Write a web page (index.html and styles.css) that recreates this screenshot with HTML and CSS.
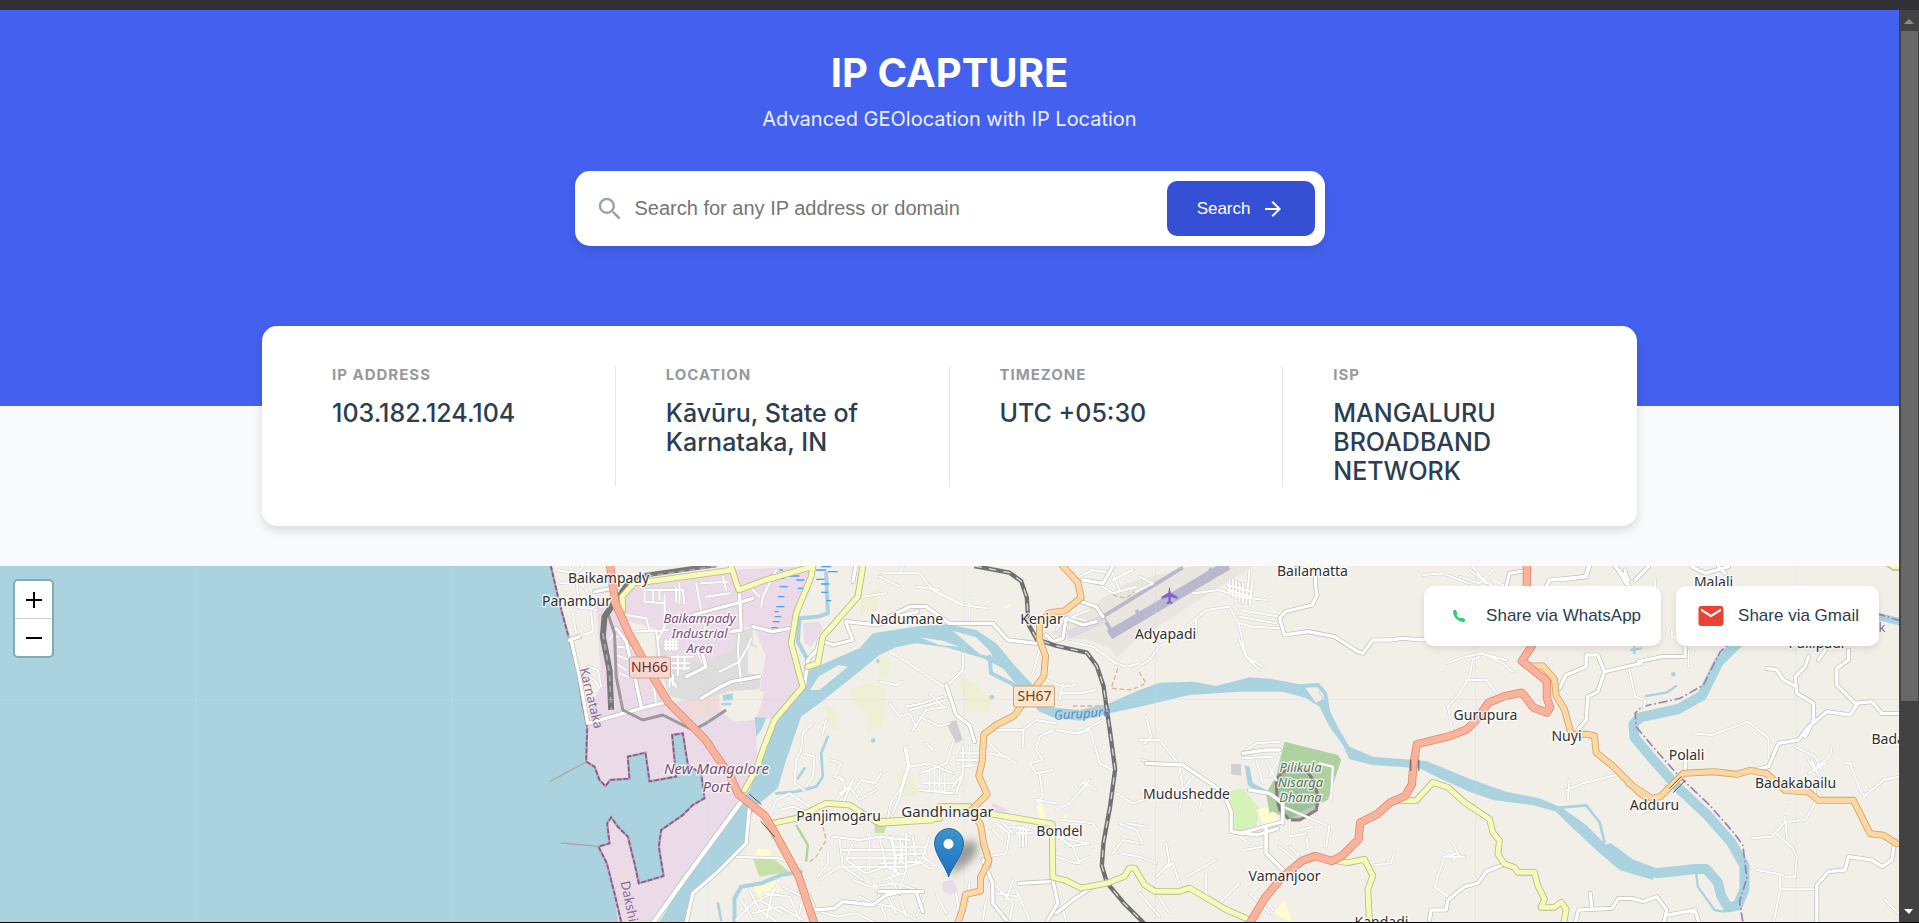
FILE: index.html
```html
<!DOCTYPE html>
<html lang="en">
<head>
<meta charset="utf-8">
<meta name="viewport" content="width=device-width, initial-scale=1">
<title>IP Capture</title>
<link rel="stylesheet" href="styles.css">
</head>
<body>
<div class="topbar"></div>
<div class="frame">
<main class="page">
  <header class="hero">
    <h1 class="hero-title">IP CAPTURE</h1>
    <p class="hero-sub">Advanced GEOlocation with IP Location</p>
    <form class="search">
      <svg class="icon" viewBox="0 0 24 24" fill="#9ca3af" aria-hidden="true"><path d="M15.5 14h-.79l-.28-.27A6.471 6.471 0 0 0 16 9.5 6.5 6.5 0 1 0 9.5 16c1.61 0 3.09-.59 4.23-1.57l.27.28v.79l5 4.99L20.49 19l-4.99-5zm-6 0C7.01 14 5 11.99 5 9.5S7.01 5 9.5 5 14 7.01 14 9.5 11.99 14 9.5 14z"/></svg>
      <input class="search-input" type="text" aria-label="IP address or domain" placeholder="Search for any IP address or domain">
      <button class="search-btn" type="button">Search
        <svg class="arrow" viewBox="0 0 24 24" fill="#fff" aria-hidden="true"><path d="m12 4-1.41 1.41L16.17 11H4v2h12.17l-5.58 5.59L12 20l8-8z"/></svg>
      </button>
    </form>
  </header>

  <section class="info">
    <div class="cell"><h2 class="label">IP ADDRESS</h2><p class="value">103.182.124.104</p></div>
    <div class="cell"><h2 class="label">LOCATION</h2><p class="value">Kāvūru, State of Karnataka, IN</p></div>
    <div class="cell"><h2 class="label">TIMEZONE</h2><p class="value">UTC +05:30</p></div>
    <div class="cell"><h2 class="label">ISP</h2><p class="value">MANGALURU BROADBAND NETWORK</p></div>
  </section>

  <section class="map">
    <svg class="map-art" viewBox="0 566 1900 356" preserveAspectRatio="xMidYMin slice" role="img" aria-label="Map around Gandhinagar">
      <defs>
        <linearGradient id="pin" x1="0" y1="0" x2="0" y2="1"><stop offset="0" stop-color="#3f93ce"/><stop offset="1" stop-color="#1b6fc0"/></linearGradient>
        <filter id="soft" x="-40%" y="-40%" width="180%" height="180%"><feGaussianBlur stdDeviation="4"/></filter>
        <g id="lanes">
          <path d="M150 20l20 40 10 80 50 10M110 30l60 10 20-20M120 70l60-5 30 40M150 235l70-20-5-60M160 160l10 60M205 320l30 10 10 50M190 340l35 20 15 25M130 130l60 15"/>
          <path d="M375 90v35l60 5 5 60M380 90h110l5 40M400 90v30M420 90v30M470 85v40M480 70v60M435 105v95l-20 40M530 70l15 80M545 70l80 -5M560 110l70-10M610 50l10 40M660 95l5 30M690 80l30 30M770 30l-40 80-5 30M320 165l60 10 10 35M335 215l110-5M410 210l10 80"/>
          <path d="M440 240v30M450 240v30M460 240v30M470 240v30M435 245h40M435 255h40M435 265h40M440 290h80M450 310h60M450 325h60M455 290v50M475 285v60M495 290v40M520 250l20 40 15 30M550 230l10-40M440 340l30 40M450 350v30M460 345v30"/>
          <path d="M290 210l-20 30M290 230l60-5M295 260l40 5M290 285l40 15M290 310l30 20M300 340l50 20M400 360l10 70M660 210l-5 60 10 100M600 335l60-30 25-45 10-25"/>
          <path d="M880 490l-30 30-5 50-15 30-5 70 30 20M850 580l35 10-5 60-20 30M920 480l-10 40M935 600l30 10-20 40 30 10M1085 640l-20 30-40-10-20 30M960 650l20 40-30 30M870 740l-60-40-40 20-20 50M780 750l40-10 50 20M960 700l30-20 30 40 50-30M1155 565l10 50-20 70-30 40-10 50M1000 660l-30 70M1110 430l30 40 30-10 20 40M1080 50l60 30M1100 100l-70 10"/>
          <path d="M940 830l80 10 60-10 90 10M960 840l10 80 60 40M1000 850l-20 50 60 40 60-20M1050 820v110M1080 830l20 90 40 20M1120 830l10 110M1150 850l-10 60M970 870h190M980 895h180M960 920h200l40-10M960 920l-60 40M1000 960l50 20 80-10 60 20M925 880v30l-30 40M1060 960l20 50M1110 950l30 50"/>
          <path d="M650 890l130 5 60 25M780 960l-20 40-60 30-50 50M690 990l30 60 50 35M730 1000l80 10 30 70M760 990l-20 90M790 980l60 30-10 50M700 1060l80-20 70 40M660 1010l40 70M720 1020l70 40M890 1050l60 20 60-10 60 30M1020 1010l40 20 60 10 70 40M1080 1020l20 60"/>
        </g>
        <g id="lanes2">
          <path d="M10 40h110l40 50 90 45 70 10M270 110v70M60 40l10-20M180 90l-70-10M250 280v50l-50 50M30 275l50 30 60 40 60 40M0 365l50 10 20-10M80 440l50-10 60-20M100 510l40-60 60-10M120 470l60 30 30-10M150 400l40 40M90 450l110-30"/>
          <path d="M140 550l20 20M80 560l10 60-30 90-20 50M90 620l60-10 70 30M120 640l80-30 20-60M150 630v60M165 625v70M180 630v60M195 640v60M130 670h100M120 690l100 10M250 560v80l-30 40M270 560v60M230 600h70M235 620l60-5M240 580h60M250 640l-20 60M330 580l50 10 30 20M320 540l50 50"/>
          <path d="M430 510v50M480 530l40-20M480 530l-10 40 20 30-40 10 20 30 50-10M350 510h80l40-30 60 10M530 510l60 10 40-10 20 60 10 40 40 20M500 360l50 20 40-5M550 370l-10 50M540 400h60l50-10M460 340l20-70M600 520l70-40"/>
          <path d="M350 790l40 30-10 60-60 10M370 790l30 30M390 800l60 10M340 810l30 30M420 800v60M430 800v60M410 820h50M440 810v50M530 750l40-20 60-70M480 640l10 70-20 20M550 780l90 10 20 30M520 820l60 40 20 50M540 830l80 20M560 860l70 -10M530 890l60 20 40-20M470 720l60 10M600 680l10-15 40 25M710 700l50 30 60-20"/>
          <path d="M780 540h60l40 50 20 25M790 600l30 10M800 470l15 60-20 20M900 620l10 70M950 640l-40 50-10 60M980 660l-20 90M720 790l50 20 20 40M740 790l60 10M720 880l60 10 50 20M700 880l30-40 50 10M860 850l10 60-40 40M850 930l30-20 20 60M920 950l90-50M980 940v60l40 40M1080 970l-60 60"/>
          <path d="M940 100l80-10 60 20 80 10M920 200l60-50 70-10 30 60 20 90 40 40M1080 170l110 20M950 180v40l-70 20-40 20-30 40-50 30M570 245l70 15 70 50 30 10 40-10M1050 60v40M1060 60v50M1070 65v50M1080 70v55M1090 70v60M1045 90l70 20M1045 75l70 20M1120 60l-10 80"/>
          <path d="M0 910l120-5 30 20M30 830l20 60-10 60M60 830l10 80M80 820v110M100 830l10 80M40 860h100M50 885l90-5M80 930l-20 60M150 830l-20 60 40 30M10 960l60-20M230 1000l10 70M20 1000l30 60M60 1010l20 60M140 1000l-30 70M310 940l30 30 60 60-10 50M400 960l-20 60M350 1000l70 10M310 1080l10-60M410 990l40 90M170 1000l30 60M270 970l-10 70"/>
          <path d="M600 50l40-20 60 10 20 50M640 60l60 40 70-20M700 60l60-30M760 100l60-30M620 180l-60-10-30 40M580 170l50-20M780 50l40 20M560 1085l-10-40 60-50M780 1000l60 70M820 980l50 80"/>
        </g>
        <g id="lanes3">
          <path d="M0 150l120 20M0 190l40 10 80 5M0 240l20 50 50 30M30 30l-10 100M550 45l60-5 80 30M690 30l70 50M700 20l40 50M660 50l60 20 40-40M760 60l40 20M620 310l60-20 50-10 60 30 30 25M720 280l80 20M690 350l-30 50-35 40 15 80M680 360l60 0 40 50M690 350l10-50 20-10M980 690l50-20 100-25M990 660l-5 60"/>
          <path d="M20 570l30-20 70-5M10 595l90-5M50 600l20 70M80 600l30 60M120 590l-30 60M240 610l40 10-5 100M130 740l140 60-10 60M150 780v50l50-10M180 810l40-10M200 830l10 50M120 860l60 50M150 860l40 40M10 870l60-10M30 1000l60 60M60 990l40 60M50 920l70 60M0 830l30 20M405 915l50-5 10-35M640 850l15 30-40 10-30 90 40 30M620 890h55M640 900l20-15"/>
        </g>
        <g id="lanes4">
          <path d="M330 320l20 90 30 10-5 30M520 520l60 5 110-40 60 50v60M700 835l60-5 40-45 60-5 30-50v-50M770 820l50 40 15 30-5 60-30 0M715 930l80 15M785 950v40l-20 100M785 988h110M830 560l60 30 20 40M880 600l20 50M870 640l50 -30M890 630l-20 -30M940 560l-5 30-40 30M980 610l15 0 30 80 15 20M1035 710l60-50 45-10M1100 1020l40 40M460 210v20l40 10M410 60v40M800 770l5 60M510 270v50M810 700v30"/>
        </g>
        <g id="minor">
          <path d="M150 240l30-10M155 240l25 110 25 140 160-45 80-20M225 95l80-15M290 205l30 40 25 100 20 95M700 200l60 15 50-10M520 165l150-40 30-10M660 95l5 115-30 5M500 350l60-30-15-50M545 415l50-30 40-20 85-15M855 380l10-80 30-35M1195 155l-60 15-60 25 -95-10M980 190l20 50-60 15-40-15-10 40M1000 65l10-50M690 740l-10 110-90 90-70 60-20 90"/>
          <path d="M870 1010l15 40 60-5 25-20 90 10 40-30 50-10 60 0"/>
        </g>
        <g id="minor2">
          <path d="M0 185l90-45h50l70 50h130l45 50 85 10M500 225l20 20 30-10 10-60 50 20 40-10M590 120l60 20 20 30M610 60l60 10 30-50M200 375l30 90 40 30 15 50M310 900l30 70v60l40 50M420 970l90-5M520 960l15 70-30 50M530 1060l50-40 60-40 45-10M800 610l110 5 60 40 60 40 25 60v60l80 10 60-20M1090 580l70-10 40 0M1160 800v80l60 60M0 995h110l20 60"/>
        </g>
        <g id="minor3">
          <path d="M228 20v60l5 25-15 30-80 20-18 20 15 50 70-10 80 15 70 45 15 5 30-40h50l40-5 60 5 30-20M0 820l130-35M30 690l60 10 40 30v60M80 800v80l50 50M790 915l-50 20-25 35-40 10-50 40-5 30h-45l-5 30M960 385l20-40 60-25v-35h35l20 50 110-25M1095 335l-20 60-30 15-5 70-30 35M800 80l10-40 60-10M920 80l10-20 110-10 10-30M1160 70l-30-50"/>
        </g>
        <g id="minor4">
          <path d="M210 20l-10 30-70 10M330 80l-10-50M290 20l40 40M350 60l40-40M520 20l40 20 70-20M600 20l20 20M500 290l-70 0-70 15M500 250v40M990 270v30l-35 25v50l60 60-20 30-70-10-55 45-30 40-60 10-30 70-45 10M1010 430l50-5 30 35h50M870 290l-10 30-30 30 5 50 50 30v50l-25 50M745 325l30 5 20 30 40 20M1130 840l-10 60-30 20-30-20-70-10-10 40-50 5-35 40v120M500 600v35M170 1090l10-40 100-5 20-30h40l35 10 40-15 30 40-10 40M215 1000l5 40M450 1065l80-15 10 35M900 300l20-30"/>
        </g>
        <g id="yellow"><path d="M310 150l-2-40 35-40 80-10 215-30 20 60 80-30 140-40M635 20l10 30M880 20l-5 30-45 110-15 90 35 130-85 100-35 90-20 60-35 60M1030 20l-15 90-70 80-35 40-15 80-30 10M760 790l70-15 90-45 70 5 80 50 190-10"/></g>
        <g id="yellow2"><path d="M0 790l160-10 20-40h90M335 762l183 30 2 160 40 10 45 22 80-15 50-20 15-25h15l30 50 30 20h75l30-10 110 65 80 35"/></g>
        <g id="yellow3"><path d="M480 722l50 0 50-55 45 15 50 45 75 50 10 40 20 25-5 40 20 30 30 10 10 15h50l10 40 20 40-10 25h40l20-15 15 20-10 60M280 900l45 8 50-10 25 50-15 40 5 100"/></g>
        <g id="orange2"><path d="M550 18l45 50 10 45-50 40-45 5-30 30 0 50 18 50-5 60-60 80-30 40-50 25-40 30-5 80-10 45 25 55-50 50 30 40 10 60 15 50-25 50v40l-45 10-10 50-30 80-30 10"/></g>
        <g id="orange3"><path d="M870 318l40 0 35 40 5 50 25 40 20 75 50 0 20 5 5 50 50 40 80 80 20 15"/></g>
        <g id="orange4"><path d="M330 670l70 45 25 -5 70-70 90-5 70 8 40-12 50 10 55 50 70 5 30 25h105l30 60 20 40 40 5 40 25"/></g>
        <g id="trunk"><path d="M272 18l15 110 40 90 60 110 60 100 110 110 75 110 25 55 80 65 40 70 60 110 30 90 20 60"/></g>
        <g id="trunk3"><path d="M862 18v70l15 170-30 45 75 60v50l10 30-10 15-40-15-35-45-50 10-50 20-35 50-30 30-50 20-100 25-10 60-5 60-20 35-45 20-40 35-50 25-5 50-50 50-30 15-50-15-40 15-60 50-50 60-60 100"/></g>
      </defs>

      <g transform="translate(520 560) scale(.33333)">
        <rect x="-1800" y="0" width="6200" height="1300" fill="#f2efe9"/>
        <g fill="#ebdbe8">
          <path d="M300 95l100-25 240-40 240-12-50 160-5 110 23 100-70 85-70 5 30-190-35-90-60 10 5 65-100 30-135 20-10-120-80-20zM230 110l60 0 90 220 60 100 60-10 100-15v35l40 45 65-5 7 80 3 60-55 100-60 90-100 140-100 160H300L150 600l50-105 30-90 15-30zM850 190l50-5 10 25-35 50-20-10zM685 245l25 10 10 25-20 10z"/>
          <path d="M1420 730l50 20-20 15-40-5zM1270 965l30-5 15 30-20 15-25-10z"/>
        </g>
        <path fill="#ddd" d="M410 240l50 60 90 5 95-35 0-60 55-5v60l-15 60 40 20-5 43-90 5-100 35-80-20-20-60z"/>
        <path fill="#f2efe9" d="M685 250l55 35-15 60-40-5zM605 405l100-15 30 5-25 85-60 0-45-30z"/>
        <path fill="#f2dad9" d="M495 430l100-25 5 35-80 45zM300 915l25 0 0 40-20 5zM365 365l10 10 0 30-15 0z"/>
        <g fill="#eef0d5"><path d="M990 390l50-20 60 15-10 120-50 10-5-60-35-30zM915 435l30 10 20 70-35-5zM1025 110l60-30-15 70-50 20zM1130 640l50 20v50l-40-5zM1080 280l35 20-10 60-30-10zM1310 340l60 30 45 50-10 40-60-10zM1130 640l50 10 20 60-60-10z"/></g>
        <path fill="#c8dfa9" d="M700 895l60 0 50 40-90 15zM1065 790l35 5-5 25h-30z"/>
        <path fill="#d5f3b8" d="M2125 695l45-10 50 60-10 55-70 20-15-60z"/>
        <path fill="#fffdd0" d="M715 865l40 5-5 20-40-5zM700 975l80-15 0 30-60 25zM2210 750l50-10 15 40-40 15zM1550 720l15 0 15 60-20 0zM2265 1060l30-40 25 70zM1620 780l25-20-10 30zM1450 140l30-10-15 15z"/>
        <path fill="#aed1a0" d="M2295 545l160 40 10 15-40 120-70 30-45 30-60-30-5-60 25-40zM2240 700l30-20 10 60-30 20z"/>
        <path fill="#8fb894" d="M2270 655l35-20h60l20 50 15 50-40 40-35 8-35-25z" opacity=".6"/>
        <path fill="none" stroke="#7d5670" stroke-width="9" opacity=".75" d="M2285 640l-15 20 3 60 8 30 30 30 30 0 50-30 5-40-15-50-20-30-60 0z"/>
        <path fill="#d0cfcf" d="M1280 490l30-10 20 60-20 10zM2135 612l30 0v35l-30-5z"/>

        <!-- airport -->
        <path fill="#e8e6df" d="M1590 220l230-150 200-52h180l-190 120-170 110-50 45-20-30-70-25-60 0z"/>
        <path fill="none" stroke="#bab8cf" stroke-width="30" d="M1770 225L2125 15"/>
        <path fill="none" stroke="#bab8cf" stroke-width="11" d="M1750 170L1990 22M1750 170l30 50M1850 150l15 25M2070 25l15 20"/>
        <path fill="none" stroke="#dcdae2" stroke-width="26" d="M1645 225l110-50"/>
        <path fill="#8461c4" d="M1950 80l4 18 20 12v7l-20-6-1 12 6 6v4l-9-3-9 3v-4l6-6-1-12-20 6v-7l20-12z"/>

        <!-- sea and harbour -->
        <path fill="#aad3df" d="M-1800 0L92 0 120 130 150 240 175 340 190 440 203 500 200 605 225 620 240 660 258 678 272 660 330 656 325 590 378 578 390 664 470 650 458 525 490 520 505 615 545 640 555 715 520 735 490 765 425 810 418 860 432 948 358 970 345 910 325 830 295 800 275 772 263 790 270 850 237 860 262 910 285 1000 320 1300-1800 1300z"/>
        <path fill="none" stroke="#b79ab8" stroke-width="7" d="M94 18L120 130 150 240 175 340 190 440 203 500 200 605 225 620 240 660 258 678 272 660 330 656 325 590 378 578 390 664 470 650 458 525 490 520 505 615 545 640 555 715 520 735 490 765 425 810 418 860 432 948 358 970 345 910 325 830 295 800 275 772 263 790 270 850 237 860 262 910 285 1000 306 1090"/>
        <path fill="none" stroke="#845f83" stroke-width="5" stroke-dasharray="14 6" d="M94 18L120 130 150 240 175 340 190 440 203 500 200 605 225 620 240 660 258 678 272 660 330 656 325 590 378 578 390 664 470 650 458 525 490 520 505 615 545 640 555 715 520 735 490 765 425 810 418 860 432 948 358 970 345 910 325 830 295 800 275 772 263 790 270 850 237 860 262 910 285 1000 306 1090"/>
        <path fill="none" stroke="#aaa" stroke-width="4" d="M92 664l108-58M124 849l112 10"/>

        <!-- rivers -->
        <g fill="#aad3df">
          <path d="M400 1120L500 950 600 810 660 730 690 690 740 570 770 490 845 400 870 330 960 290 1020 265 1060 220 1200 198 1280 193 1370 210 1430 250 1480 310 1540 375 1575 440 1680 450 1770 430 1860 390 1920 368 2020 365 2090 378 2190 352 2250 356 2350 374 2400 395 2425 440 2460 510 2490 560 2560 590 2720 603 2860 660 2960 695 3060 715 3130 745 3200 795 3290 885 3400 930 3400 960 3300 930 3230 870 3150 795 3110 755 3040 735 2920 720 2850 695 2760 655 2700 625 2560 615 2490 598 2470 555 2430 500 2400 440 2360 415 2290 395 2160 395 2010 405 1860 440 1770 460 1680 482 1600 472 1560 455 1500 385 1450 325 1390 295 1280 262 1190 250 1130 262 1080 285 1000 350 900 430 845 470 800 600 775 685 720 730 690 770 680 840 650 890 580 940 530 990 500 1050 495 1120z"/>
          <path d="M705 470l35 5-15 35-15 20zM610 405l30-5 0 20-30 3zM605 428l30 0v8h-30zM1400 890l20-5-5 40-15-5zM2175 615l15 5 10 50 40 20-20 10-35-25z"/>
          <circle cx="1061" cy="541" r="7"/><circle cx="1075" cy="303" r="6"/><circle cx="1417" cy="411" r="7"/><circle cx="3462" cy="343" r="7"/>
        </g>
        <path fill="#f2efe9" d="M872 390l25-40 60-35 28 5-30 25-55 45zM1200 232l70 10 50 18-60-5zM1300 212l70 20 40 40 10 20-40-10zM2355 380l35 3 20 35-20 10z"/>
        <g fill="none" stroke="#aad3df" stroke-linejoin="round" stroke-linecap="round">
          <path stroke-width="12" d="M1410 290l5 50 60 30 50 30M920 40l5 120-30 10-55 5-5 70 30 55M2345 378l50-3 22 25 8 50M645 1085l0-70 20-35 60-10 60-25 60-10"/>
          <path stroke-width="8" d="M3120 743l80-7 40 50 15 60M3150 785l40 40 50 30M595 1030l10 50M925 530l-20 50 5 70-20 30-60 15-60 5M855 625l-20 30"/>
          <path stroke-width="30" d="M3270 865l60 45 80 30 120-13 30 0 35 40 10 40 20 35 30-5 20-50 0-70-40-70-70-80-90-85-80-90-50-60-3-40 20-20 115-25 70-40 50-100 60-60 60-20"/>
          <path stroke-width="7" d="M3530 940l5 40 50 70 30 5M3380 408l60-10 30-20M3345 280l0-30M3335 270l30-5"/>
          <path stroke-width="22" d="M4060 165l80 20"/>
        </g>
        <path fill="none" stroke="#9b83ab" stroke-width="5" stroke-dasharray="28 8 5 8" d="M3670 1085l-10-60 22-70-12-100-30-40-70-80-90-85-80-90-50-60-3-40 20-20 115-25 70-40 50-100 60-50M4070 160l80 25"/>
        <path fill="none" stroke="#4a9dfa" stroke-width="4" d="M780 30h10M815 30h35M905 20h30M890 30h30M800 48h40M780 55h15M925 35h30M830 60h25M890 58h25M780 80h25M835 85h20M905 72h25M775 110h20M905 97h20M770 140h25M765 155h12M920 122h15M765 170h20M760 185h20M755 203h20"/>

        <!-- minor roads: casing, then surface -->
        <g fill="none" stroke="#cfcdca" stroke-width="9" stroke-linejoin="round" stroke-linecap="round">
          <use href="#lanes"/><use href="#lanes2" x="1080"/><use href="#lanes3" x="2160"/><use href="#lanes4" x="2997"/>
        </g>
        <g fill="none" stroke="#fff" stroke-width="6" stroke-linejoin="round" stroke-linecap="round">
          <use href="#lanes"/><use href="#lanes2" x="1080"/><use href="#lanes3" x="2160"/><use href="#lanes4" x="2997"/>
        </g>
        <g fill="none" stroke="#bdbbb8" stroke-width="14" stroke-linejoin="round" stroke-linecap="round">
          <use href="#minor"/><use href="#minor2" x="1080"/><use href="#minor3" x="2160"/><use href="#minor4" x="2997"/>
          <path d="M665 725L500 950 400 1090" stroke-width="17"/>
        </g>
        <g fill="none" stroke="#fff" stroke-width="10" stroke-linejoin="round" stroke-linecap="round">
          <use href="#minor"/><use href="#minor2" x="1080"/><use href="#minor3" x="2160"/><use href="#minor4" x="2997"/>
          <path d="M665 725L500 950 400 1090" stroke-width="13"/>
        </g>
        <path fill="none" stroke="#d9b98c" stroke-width="4" stroke-dasharray="14 8" d="M1795 325l-20 60 60 5 45-20-25-40M1780 105l40 10 25-20M1660 438h90M910 800l10 40-30 50-25 20"/>
        <path fill="none" stroke="#a6d59a" stroke-width="7" d="M830 795l35 60-5 50"/>

        <!-- railways -->
        <g fill="none" stroke-linejoin="round">
          <path stroke="#9a9a9a" stroke-width="9" d="M265 160l20 60 5 130 20 100 60 30 60-15 90 45 40-20 60-40"/>
          <path stroke="#777" stroke-width="14" d="M590 15L380 45 320 75 290 120"/>
          <path stroke="#777" stroke-width="18" d="M290 120L255 170 250 230 270 330 275 450"/>
          <path stroke="#aaa" stroke-width="5" stroke-dasharray="18 14" d="M590 18L380 50M250 220l20 120 5 110"/>
          <path stroke="#707070" stroke-width="13" d="M1365 18l105 20 35 25 17 50 5 80 25 45 60 20 90 20 30 40 20 60 20 140 15 110-15 110-20 110-5 70 15 50 50 60 80 80"/>
          <path stroke="#d8d8d8" stroke-width="4" stroke-dasharray="22 22" d="M1365 18l105 20 35 25 17 50 5 80 25 45 60 20 90 20 30 40 20 60 20 140 15 110-15 110-20 110-5 70 15 50 50 60 80 80"/>
        </g>

        <!-- classified roads -->
        <g fill="none" stroke-linejoin="round" stroke-linecap="round">
          <g stroke="#b9bb84" stroke-width="20"><use href="#yellow"/><use href="#yellow2" x="1080"/><use href="#yellow3" x="2160"/></g>
          <g stroke="#f5f9ba" stroke-width="15"><use href="#yellow"/><use href="#yellow2" x="1080"/><use href="#yellow3" x="2160"/></g>
          <g stroke="#cfa562" stroke-width="21"><use href="#orange2" x="1080"/><use href="#orange3" x="2160"/><use href="#orange4" x="2997"/></g>
          <g stroke="#fcd6a4" stroke-width="16"><use href="#orange2" x="1080"/><use href="#orange3" x="2160"/><use href="#orange4" x="2997"/></g>
          <g stroke="#e08c73" stroke-width="25"><use href="#trunk"/><use href="#trunk3" x="2160"/></g>
          <g stroke="#f9b29c" stroke-width="20"><use href="#trunk"/><use href="#trunk3" x="2160"/></g>
          <path stroke="#555" stroke-width="3" d="M690 703l35 30M725 785l40 45M2674 600v32M2698 600v32M3450 685l35-35M3462 697l35-35"/>
        </g>
        <path fill="#f5f9ba" stroke="#b9bb84" stroke-width="4" d="M4100 16l50 0 0 14-30 0z"/>
        <path stroke="#c6dfe2" stroke-width="3" opacity=".35" d="M-1560 419H4140M-970 18V1090M-202 18V1090M566 18V1090M1334 18V1090M1908 18V1090M2868 18V1090M3830 18V1090"/>
      </g>

      <g class="place">
        <text x="609" y="583">Baikampady</text><text x="577" y="606">Panambur</text>
        <text x="907" y="624">Nadumane</text><text x="1042" y="624">Kenjar</text>
        <text x="1166" y="639">Adyapadi</text><text x="1313" y="576">Bailamatta</text>
        <text class="town" x="948" y="817">Gandhinagar</text><text x="839" y="821">Panjimogaru</text>
        <text x="1060" y="836">Bondel</text><text x="1187" y="799">Mudushedde</text>
        <text x="1285" y="881">Vamanjoor</text><text x="1486" y="720">Gurupura</text>
        <text x="1567" y="741">Nuyi</text><text x="1714" y="587">Malali</text>
        <text x="1817" y="648">Pallipadi</text><text x="1687" y="760">Polali</text>
        <text x="1655" y="810">Adduru</text><text x="1796" y="788">Badakabailu</text>
        <text class="edge" x="1872" y="744">Bada</text><text x="1382" y="927">Kandadi</text>
      </g>
      <g class="area">
        <text x="700" y="623">Baikampady</text><text x="700" y="638">Industrial</text><text x="700" y="653">Area</text>
        <text class="port" x="717" y="774">New Mangalore</text><text class="port" x="717" y="792">Port</text>
      </g>
      <g class="area park">
        <text x="1301" y="772">Pilikula</text><text x="1301" y="787">Nisarga</text><text x="1301" y="802">Dhama</text>
      </g>
      <text class="district" transform="translate(580 669) rotate(76)">Karnataka</text>
      <text class="district" transform="translate(621 882) rotate(78)">Dakshina</text>
      <text class="district" x="1879" y="632">k</text>
      <text class="river" transform="translate(1083 718) rotate(-4)">Gurupura</text>
      <g class="shield">
        <rect x="630" y="657" width="41" height="21" rx="2" fill="#f5d9d0" stroke="#dc9c87"/><text x="650" y="672" fill="#7a2a1a">NH66</text>
        <rect x="1014" y="686" width="41" height="21" rx="2" fill="#f9e5d0" stroke="#cfa574"/><text x="1035" y="701" fill="#6e4416">SH67</text>
      </g>

      <g>
        <path d="M950 876l6-24c5-10 14-14 20-9 5 5-1 16-9 21z" fill="#333" opacity=".45" filter="url(#soft)"/>
        <path d="M949 877c-1-8-14-22-14-34a14 14 0 0 1 29 0c0 12-13 26-15 34z" fill="url(#pin)" stroke="#2568a5"/>
        <circle cx="949" cy="844" r="5" fill="#fff"/>
      </g>
    </svg>

    <div class="zoom">
      <button type="button" class="zoom-btn" aria-label="Zoom in"><svg viewBox="0 0 16 16" aria-hidden="true"><path d="M0 8h16M8 0v16"/></svg></button>
      <button type="button" class="zoom-btn" aria-label="Zoom out"><svg viewBox="0 0 16 16" aria-hidden="true"><path d="M0 8h16"/></svg></button>
    </div>

    <div class="share">
      <button type="button" class="share-btn">
        <svg class="icon" viewBox="0 0 24 24" fill="none" stroke="#25d366" stroke-linecap="round" aria-hidden="true"><path stroke-width="2" d="M8.300 8.800c.2 3.700 3.200 6.700 6.900 6.900"/><path stroke-width="2.600" d="M8.700 8.400l.5 1.600M14 14.800l1.600.5"/></svg>
        Share via WhatsApp
      </button>
      <button type="button" class="share-btn">
        <svg class="icon" viewBox="0 0 24 24" fill="#ea4335" aria-hidden="true"><path d="M20 4H4c-1.100 0-2 .9-2 2v12c0 1.100.9 2 2 2h16c1.100 0 2-.9 2-2V6c0-1.100-.9-2-2-2zm0 4-8 5-8-5V6l8 5 8-5z"/></svg>
        Share via Gmail
      </button>
    </div>
  </section>
</main>
<aside class="scroll" aria-hidden="true">
  <svg class="scroll-arrow" viewBox="0 0 20 21"><path d="M5 14l5-5 5 5z" fill="#8b8b8b"/></svg>
  <div class="track"><div class="thumb"></div></div>
  <svg class="scroll-arrow" viewBox="0 0 20 21"><path d="M5 8h9l-4 5z" fill="#fff"/></svg>
</aside>
</div>
</body>
</html>
```
FILE: styles.css
```css
* { box-sizing: border-box; }
body {
  margin: 0;
  height: 100vh;
  display: flex;
  flex-direction: column;
  overflow: hidden;
  border-bottom: 1px solid #000;
  background: #f9fafc;
  font-family: Inter, Roboto, "Liberation Sans", sans-serif;
}
h1, h2, p { margin: 0; }
button, input { font-family: "Liberation Sans", Arial, sans-serif; }
.topbar { height: 10px; flex: none; background: #323136; }
.frame { flex: 1; min-height: 0; display: flex; }
.page { flex: 1; min-width: 0; display: flex; flex-direction: column; }

.hero {
  display: flex;
  flex-direction: column;
  align-items: center;
  padding: 40px 20px 160px;
  background: #4361ee;
}
.hero-title { font-size: 40px; line-height: 46px; font-weight: 700; color: #fff; }
.hero-sub { margin-top: 11px; font-size: 20px; line-height: 24px; color: #ecefff; }
.search {
  display: flex;
  align-items: center;
  gap: 10px;
  width: 100%;
  max-width: 750px;
  margin-top: 40px;
  padding: 10px 10px 10px 20px;
  border-radius: 15px;
  background: #fff;
  box-shadow: 0 5px 10px rgba(0, 0, 0, .1);
}
.icon { width: 30px; height: 30px; flex: none; }
.search-input {
  flex: 1;
  min-width: 0;
  padding: 0;
  border: 0;
  outline: 0;
  background: none;
  font-size: 20px;
  color: #2c3e50;
}
.search-input::placeholder { color: #757575; }
.search-btn {
  display: flex;
  align-items: center;
  gap: 10px;
  height: 55px;
  padding: 0 30px;
  border: 0;
  border-radius: 10px;
  background: #3550d5;
  color: #fff;
  font-size: 17px;
}
.arrow { width: 24px; height: 24px; }

.info {
  position: relative;
  width: calc(100% - 40px);
  max-width: 1375px;
  margin: -80px auto 40px;
  padding: 40px 20px;
  display: grid;
  grid-template-columns: repeat(4, 1fr);
  border-radius: 15px;
  background: #fff;
  box-shadow: 0 5px 10px rgba(0, 0, 0, .12);
}
.cell { padding: 0 50px; min-height: 120px; }
.cell:not(:last-child) { border-right: 1px solid #e4e6e8; }
.label { font-size: 15px; line-height: 18px; font-weight: 700; letter-spacing: 1px; color: #969a9c; }
.value { margin-top: 15px; font-size: 25px; line-height: 29px; font-weight: 500; color: #2c3e50; }

.map { position: relative; flex: 1; min-height: 0; overflow: hidden; background: #f2efe9; }
.map-art { display: block; width: 100%; height: 100%; }
.map-art text { font-family: "Noto Sans", sans-serif; }
.place text, .area text {
  text-anchor: middle;
  paint-order: stroke;
  stroke: rgba(255, 255, 255, .7);
  stroke-width: 3px;
  stroke-linejoin: round;
}
.place { font-size: 14px; fill: #333; }
.place .town { font-size: 15px; }
.place .edge { text-anchor: start; }
.area { font-size: 13px; font-style: italic; fill: #7a527a; }
.area .port { font-size: 15px; }
.park { fill: #5d7a5c; }
.district { font-size: 13px; fill: #8e6c96; }
.river { font-size: 13px; font-style: italic; fill: #5a8fbe; text-anchor: middle; }
.shield { font-size: 14px; text-anchor: middle; }

.zoom {
  position: absolute;
  top: 13px;
  left: 13px;
  display: flex;
  flex-direction: column;
  border: 2px solid #86a9b3;
  border-radius: 5px;
  background: #fff;
}
.zoom-btn {
  display: grid;
  place-items: center;
  width: 37px;
  height: 37px;
  padding: 0;
  border: 0;
  background: none;
}
.zoom-btn + .zoom-btn { height: 38px; border-top: 1px solid #ccc; }
.zoom-btn svg { width: 16px; height: 16px; fill: none; stroke: #000; stroke-width: 2; }

.share { position: absolute; top: 20px; right: 20px; display: flex; gap: 15px; }
.share-btn {
  display: flex;
  align-items: center;
  gap: 12px;
  height: 60px;
  padding: 0 20px;
  border: 0;
  border-radius: 10px;
  background: #fff;
  box-shadow: 0 3px 6px rgba(0, 0, 0, .1);
  color: #2c3e50;
  font-size: 17px;
}

.scroll { width: 20px; flex: none; display: flex; flex-direction: column; background: #424242; }
.scroll-arrow { width: 20px; height: 21px; flex: none; }
.track { flex: 1; padding: 0 1px 0 2px; }
.thumb { height: 77%; background: #686868; }
```
